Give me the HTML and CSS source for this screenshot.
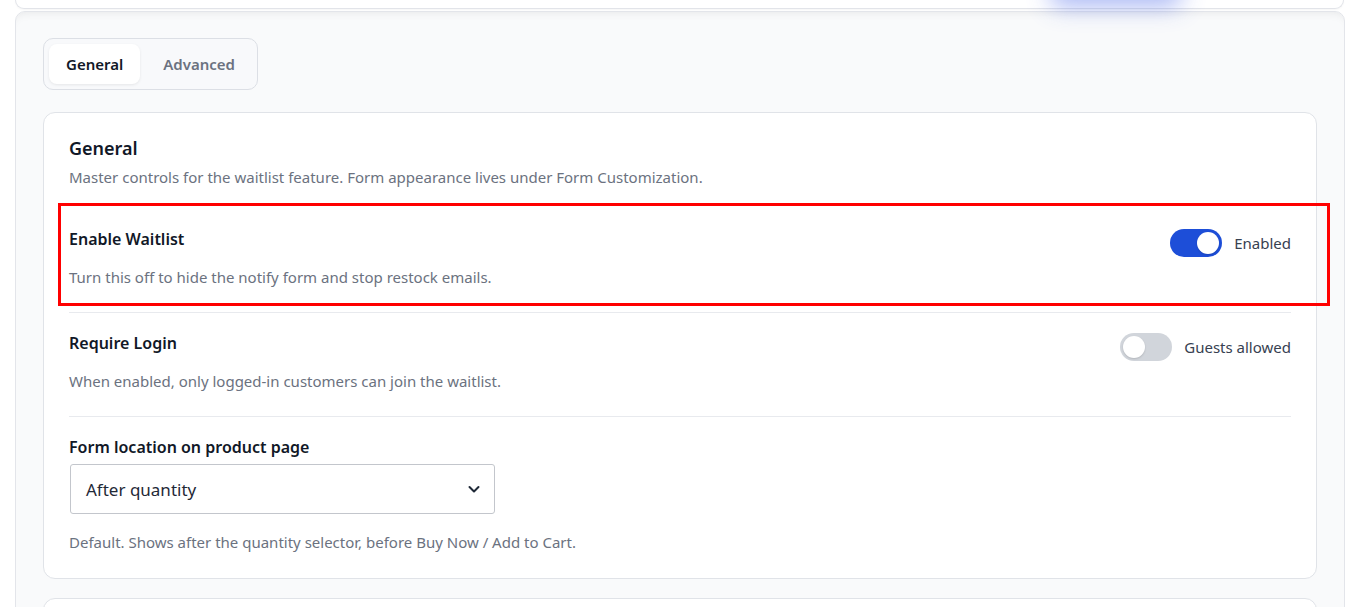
FILE: index.html
```html
<!DOCTYPE html>
<html lang="en">
<head>
    <meta charset="UTF-8">
    <meta name="viewport" content="width=device-width, initial-scale=1.0">
    <title>Waitlist Settings</title>
    <link rel="stylesheet" href="styles.css">
</head>
<body>

    <!-- Header card, mostly scrolled out of view -->
    <div class="top-card">
        <span class="glow"></span>
    </div>

    <div class="panel">
        <!-- Tabs -->
        <div class="tabs">
            <button class="tab active">General</button>
            <button class="tab">Advanced</button>
        </div>

        <!-- General settings card -->
        <div class="card">
            <h3 class="card-title">General</h3>
            <p class="card-desc">Master controls for the waitlist feature. Form appearance lives under Form Customization.</p>

            <div class="row highlighted">
                <div class="row-head">
                    <span class="row-title">Enable Waitlist</span>
                    <label class="switch-wrap">
                        <span class="switch on"><span class="knob"></span></span>
                        <span class="switch-label">Enabled</span>
                    </label>
                </div>
                <p class="row-desc">Turn this off to hide the notify form and stop restock emails.</p>
            </div>

            <div class="row">
                <div class="row-head">
                    <span class="row-title">Require Login</span>
                    <label class="switch-wrap">
                        <span class="switch"><span class="knob"></span></span>
                        <span class="switch-label">Guests allowed</span>
                    </label>
                </div>
                <p class="row-desc">When enabled, only logged-in customers can join the waitlist.</p>
            </div>

            <div class="row last">
                <div class="row-head">
                    <span class="row-title">Form location on product page</span>
                </div>
                <div class="select">
                    <span>After quantity</span>
                    <svg width="16" height="16" viewBox="0 0 16 16" fill="none" stroke="#1f2937" stroke-width="2" stroke-linecap="round" stroke-linejoin="round">
                        <path d="M3.5 6l4.5 4.5L12.5 6"/>
                    </svg>
                </div>
                <p class="row-desc help">Default. Shows after the quantity selector, before Buy Now / Add to Cart.</p>
            </div>
        </div>

        <!-- Next card, cut off by the window -->
        <div class="card next"></div>
    </div>

</body>
</html>
```

FILE: styles.css
```css
/* Page */
body {
    margin: 0;
    font-family: 'Noto Sans', 'Open Sans', sans-serif;
    background: #ffffff;
    color: #111827;
    overflow: hidden;
}

/* Header card at the top edge */
.top-card {
    position: relative;
    height: 8px;
    margin: 0 2px 0 15px;
    background: #ffffff;
    border: 1px solid #e2e4e9;
    border-top: none;
    border-radius: 0 0 10px 10px;
    box-shadow: 0 1px 2px rgba(0, 0, 0, 0.04);
}

.glow {
    position: absolute;
    left: 1035px;
    top: -30px;
    width: 130px;
    height: 30px;
    border-radius: 8px;
    box-shadow: 0 6px 24px rgba(59, 90, 230, 0.45);
}

/* Outer panel */
.panel {
    margin: 2px 1px 0 15px;
    padding: 26px 27px 0 27px;
    background: #f9fafb;
    border: 1px solid #e3e5ea;
    border-radius: 10px;
    box-shadow: inset 0 8px 12px -10px rgba(0, 0, 0, 0.12);
}

/* Tabs */
.tabs {
    display: inline-flex;
    vertical-align: top;
    gap: 6px;
    padding: 5px;
    background: #f8f9fb;
    border: 1px solid #dcdfe5;
    border-radius: 10px;
}

.tab {
    font-family: inherit;
    font-size: 15px;
    font-weight: 600;
    color: #6b7280;
    background: transparent;
    border: none;
    border-radius: 8px;
    padding: 0 17px;
    height: 40px;
    cursor: pointer;
}

.tab.active {
    background: #ffffff;
    color: #111827;
    box-shadow: 0 1px 3px rgba(0, 0, 0, 0.08);
}

/* Card */
.card {
    margin-top: 22px;
    padding: 22px 25px 24px 25px;
    background: #ffffff;
    border: 1px solid #e0e3e8;
    border-radius: 12px;
}

.card.next {
    margin-top: 19px;
    height: 40px;
    padding: 0;
}

.card-title {
    margin: 0;
    font-size: 18px;
    font-weight: 600;
    line-height: 26px;
}

.card-desc {
    margin: 5px 0 21px 0;
    font-size: 15px;
    line-height: 22px;
    color: #6b7280;
}

/* Setting rows */
.row {
    position: relative;
    padding: 18px 0 24px 0;
    border-bottom: 1px solid #e8eaee;
}

.row.last {
    border-bottom: none;
    padding-bottom: 1px;
}

.row-head {
    display: flex;
    align-items: flex-start;
    justify-content: space-between;
}

.row-title {
    font-size: 16px;
    font-weight: 600;
    line-height: 24px;
}

.row-desc {
    margin: 9px 0 0 0;
    font-size: 15px;
    line-height: 22px;
    color: #6b7280;
}

.row-desc.help {
    margin-top: 17px;
}

/* Red annotation box */
.highlighted::after {
    content: "";
    position: absolute;
    top: -6px;
    left: -11px;
    right: -39px;
    bottom: 6px;
    border: 3px solid #ff0000;
    pointer-events: none;
}

/* Toggle switch */
.switch-wrap {
    display: flex;
    align-items: center;
    gap: 12px;
    margin-top: 2px;
    cursor: pointer;
}

.switch {
    display: flex;
    align-items: center;
    width: 52px;
    height: 28px;
    padding: 3px;
    box-sizing: border-box;
    border-radius: 14px;
    background: #d1d5db;
}

.switch .knob {
    width: 22px;
    height: 22px;
    border-radius: 50%;
    background: #ffffff;
    box-shadow: 0 1px 2px rgba(0, 0, 0, 0.15);
}

.switch.on {
    background: #1d4ed8;
    justify-content: flex-end;
}

.switch-label {
    font-size: 15px;
    color: #374151;
}

/* Select */
.select {
    display: flex;
    align-items: center;
    justify-content: space-between;
    width: 425px;
    height: 50px;
    box-sizing: border-box;
    margin: 5px 0 0 1px;
    padding: 0 12px 0 15px;
    border: 1px solid #c3c6cc;
    border-radius: 3px;
    font-size: 17px;
    color: #1f2937;
}
```
